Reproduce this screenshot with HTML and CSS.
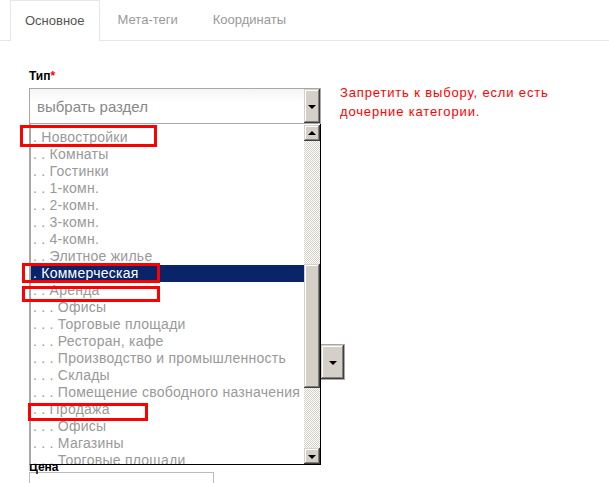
FILE: index.html
```html
<!DOCTYPE html>
<html lang="ru">
<head>
    <meta charset="UTF-8">
    <title>Редактирование раздела</title>
    <link rel="stylesheet" href="styles.css">
</head>
<body>
    <ul class="tabs">
        <li class="tab active">Основное</li>
        <li class="tab">Мета-теги</li>
        <li class="tab">Координаты</li>
    </ul>

    <div class="form">
        <div class="row">
            <div class="field">
                <label class="label">Тип<span class="req">*</span></label>
                <div class="select">
                    <span class="select-text">выбрать раздел</span>
                    <span class="btn"><span class="arrow-down"></span></span>
                </div>

                <!-- открытый список -->
                <div class="dropdown">
                    <ul class="options">
                        <li>. Новостройки</li>
                        <li>. . Комнаты</li>
                        <li>. . Гостинки</li>
                        <li>. . 1-комн.</li>
                        <li>. . 2-комн.</li>
                        <li>. . 3-комн.</li>
                        <li>. . 4-комн.</li>
                        <li>. . Элитное жилье</li>
                        <li class="selected">. Коммерческая</li>
                        <li>. . Аренда</li>
                        <li>. . . Офисы</li>
                        <li>. . . Торговые площади</li>
                        <li>. . . Ресторан, кафе</li>
                        <li>. . . Производство и промышленность</li>
                        <li>. . . Склады</li>
                        <li>. . . Помещение свободного назначения</li>
                        <li>. . Продажа</li>
                        <li>. . . Офисы</li>
                        <li>. . . Магазины</li>
                        <li>. . . Торговые площади</li>
                    </ul>
                    <div class="scrollbar">
                        <span class="btn"><span class="arrow-up"></span></span>
                        <span class="track"><span class="thumb"></span></span>
                        <span class="btn"><span class="arrow-down"></span></span>
                    </div>
                </div>

                <!-- пометки -->
                <span class="mark mark-1"></span>
                <span class="mark mark-2"></span>
                <span class="mark mark-3"></span>
                <span class="mark mark-4"></span>
            </div>
            <p class="note">Запретить к выбору, если есть<br>дочерние категории.</p>
        </div>

        <div class="field second">
            <label class="label">Район</label>
            <div class="select wide">
                <span class="select-text">выбрать район</span>
                <span class="btn big"><span class="arrow-down"></span></span>
            </div>
        </div>

        <div class="field third">
            <label class="label">Цена</label>
            <input class="input" type="text">
        </div>
    </div>
</body>
</html>
```

FILE: styles.css
```css
body {
    margin: 0;
    font-family: 'Liberation Sans', Arial, sans-serif;
    color: #000;
    background: #fff;
}
/* Tabs */
.tabs {
    display: flex;
    margin: 0;
    padding: 0 0 0 10px;
    list-style: none;
    border-bottom: 1px solid #e6e6e6;
    height: 40px;
}
.tab {
    padding: 0 17px 0 18px;
    line-height: 40px;
    font-size: 13px;
    color: #999;
}
.tab.active {
    color: #555;
    padding: 0 14px;
    border: 1px solid #e6e6e6;
    border-bottom: none;
    background: #fff;
    height: 40px;
    line-height: 40px;
    margin-bottom: -1px;
}
/* Form */
.form {
    padding: 28px 0 0 29px;
}
.row {
    display: flex;
    align-items: flex-start;
}
.field {
    position: relative;
    width: 292px;
}
.label {
    display: block;
    font-size: 12px;
    font-weight: bold;
    height: 19px;
}
.req {
    color: #f00;
}
.select {
    display: flex;
    justify-content: space-between;
    align-items: center;
    height: 34px;
    border: 1px solid #a8a8a8;
    background: linear-gradient(#f4f4f4, #fff 40%);
}
.select.wide {
    width: 314px;
}
.select-text {
    padding-left: 7px;
    font-size: 15px;
    color: #888;
}
.btn {
    display: flex;
    align-items: center;
    justify-content: center;
    width: 16px;
    height: 16px;
    background: #d4d0c8;
    box-shadow: inset -1px -1px #404040, inset 1px 1px #d4d0c8,
        inset -2px -2px #808080, inset 2px 2px #fff;
}
.select > .btn {
    height: 34px;
}
.select > .btn.big {
    width: 23px;
    height: 34px;
}
.arrow-down,
.arrow-up {
    width: 0;
    height: 0;
    border-left: 4px solid transparent;
    border-right: 4px solid transparent;
}
.arrow-down {
    border-top: 4px solid #000;
    margin-top: 1px;
}
.arrow-up {
    border-bottom: 4px solid #000;
    margin-top: -1px;
}
.note {
    margin: 14px 0 0 19px;
    font-size: 13px;
    line-height: 19px;
    letter-spacing: 0.85px;
    color: #f00;
}
.field.second {
    margin-top: 202px;
}
.field.second .label {
    height: 18px;
}
.field.third {
    margin-top: 82px;
}
.field.third .label {
    height: 10px;
    line-height: 10px;
}
.input {
    display: block;
    width: 183px;
    height: 30px;
    margin: 0;
    padding: 0;
    border: 1px solid #bbb;
}
/* Open list */
.dropdown {
    position: absolute;
    top: 55px;
    left: 0;
    z-index: 10;
    display: flex;
    width: 290px;
    height: 340px;
    border-left: 2px solid #a8a8a8;
    border-bottom: 1px solid #000;
    background: #fff;
    overflow: hidden;
}
.options {
    flex: 1;
    margin: 0;
    padding: 5px 0 0 0;
    list-style: none;
}
.options li {
    height: 17px;
    line-height: 17px;
    padding-left: 2px;
    font-size: 14px;
    letter-spacing: 0.25px;
    color: #999;
    white-space: nowrap;
}
.options li.selected {
    background: #0a246a;
    color: #fff;
}
.scrollbar {
    display: flex;
    flex-direction: column;
    width: 16px;
    padding-top: 1px;
    border-right: 1px solid #000;
}
.track {
    flex: 1;
    background: repeating-conic-gradient(#d4d0c8 0 25%, #fff 0 50%) 0 0 / 2px 2px;
}
.thumb {
    display: block;
    height: 124px;
    margin-top: 123px;
    background: #d4d0c8;
    box-shadow: inset -1px -1px #404040, inset 1px 1px #d4d0c8,
        inset -2px -2px #808080, inset 2px 2px #fff;
}
/* Red annotation frames */
.mark {
    position: absolute;
    z-index: 20;
    border: 3px solid #f00;
}
.mark-1 { left: -9px; top: 56px; width: 131px; height: 16px; }
.mark-2 { left: -7px; top: 194px; width: 132px; height: 14px; }
.mark-3 { left: -7px; top: 217px; width: 132px; height: 10px; }
.mark-4 { left: -1px; top: 334px; width: 114px; height: 12px; }
```
